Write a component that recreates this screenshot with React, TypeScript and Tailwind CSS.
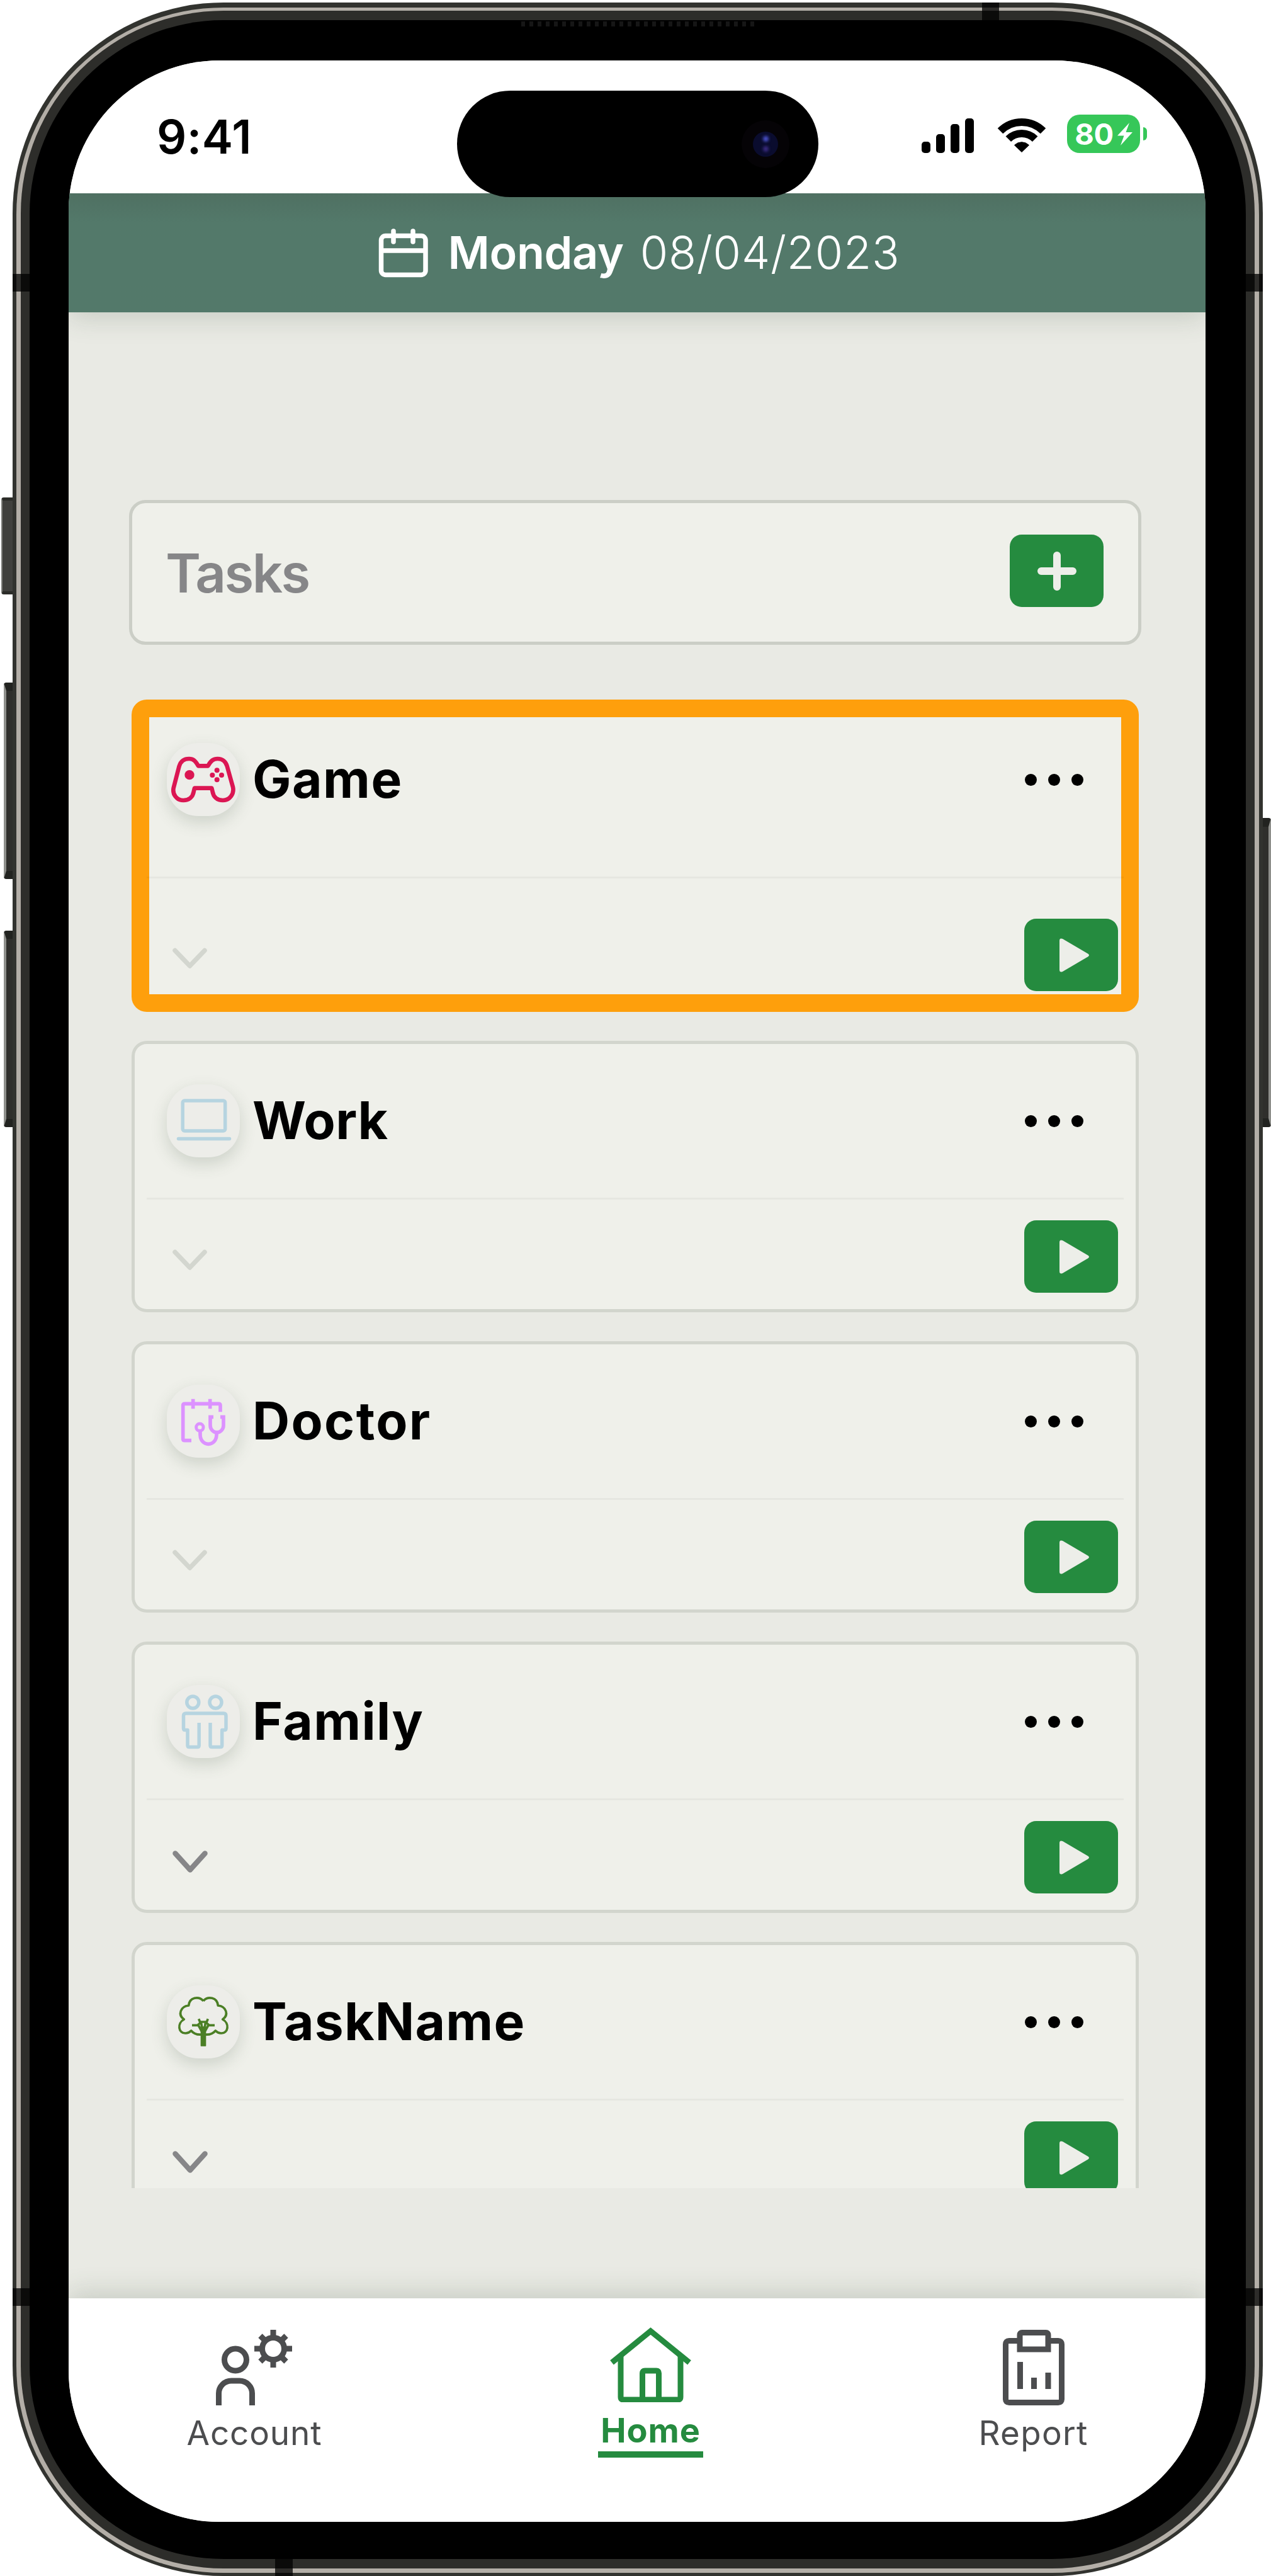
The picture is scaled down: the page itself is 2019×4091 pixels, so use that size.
import type { ReactNode } from "react";

type Task = {
  name: string;
  icon: ReactNode;
  tracking: string;
  highlighted?: boolean;
  expandable?: boolean;
};

const GameIcon = () => (
  <svg viewBox="30 28 348 348" className="size-full" fill="none" stroke="#db1653">
    <path
      strokeWidth="20"
      strokeLinejoin="round"
      d="M180 137H226C240 112 252 103 272 103C296 103 311 118 317 138L345 238C352 270 330 301 297 301C268 301 252 283 248 260L244 243H162L158 260C154 284 136 301 109 301C77 301 56 273 62 242L89 138C96 116 112 103 136 103C156 103 166 112 180 137Z"
    />
    <g fill="#db1653" stroke="none">
      <circle cx="138" cy="180" r="23" />
      <circle cx="269" cy="158" r="12" />
      <circle cx="247" cy="181" r="12" />
      <circle cx="291" cy="181" r="12" />
      <circle cx="269" cy="203" r="12" />
    </g>
  </svg>
);

const LaptopIcon = () => (
  <svg viewBox="0 0 116 116" className="size-full" fill="none" stroke="#b6d4e0" strokeWidth="5.500">
    <rect x="25.2" y="26" width="67.5" height="48" rx="3" />
    <path d="M18.500 86.5H99.500" strokeLinecap="round" />
  </svg>
);

const DoctorIcon = () => (
  <svg viewBox="30 28 348 348" className="size-full" fill="none" stroke="#dc92ff" strokeWidth="17">
    <path d="M147 294H115q-8 0-8-8V127q0-8 8-8H277q8 0 8 8V158" />
    <path d="M155 96V143M236 96V143" />
    <circle cx="187" cy="231" r="17" strokeWidth="15" />
    <path d="M189 248V268a39 43 0 0 0 78 0V255" />
    <path d="M252 182H237V222a31 33 0 0 0 63 0V182H285" />
  </svg>
);

const FamilyIcon = () => (
  <svg viewBox="0 0 116 116" className="size-full" fill="none" stroke="#b6d4e0" strokeWidth="5.500" strokeLinejoin="round">
    <circle cx="41.3" cy="27.5" r="9.5" />
    <circle cx="77.5" cy="27.5" r="9.5" />
    <path d="M51.2 60V96q0 2.5-2.5 2.5H35.5q-2.500 0-2.500-2.500V71.500H29q-2.500 0-2.500-2.500V49q0-4 4-4H90q4 0 4 4V69q0 2.500-2.500 2.500H87.700V96q0 2.500-2.500 2.500H71.500q-2.500 0-2.500-2.500V60" />
  </svg>
);

const TreeIcon = () => (
  <svg viewBox="30 28 348 348" className="size-full" fill="none" stroke="#4b7f25" strokeWidth="11" strokeLinejoin="round">
    <path d="M204 102C182 78 138 84 134 124C96 128 80 168 112 190C78 208 84 258 120 256C130 256 138 252 146 244C158 258 178 264 196 262" />
    <path d="M204 102C226 78 270 84 274 124C312 128 328 168 296 190C330 208 324 258 288 256C278 256 270 252 262 244C250 258 230 264 212 262" />
    <path d="M150 218H176L190 206M258 218H232L218 206M182 188L188 202H220L226 188M178 214L198 250M230 214L210 250M193 202L200 244M215 202L208 244" />
    <path fill="#4b7f25" strokeWidth="4" d="M193 250L200 226H208L215 250V316H193Z" />
  </svg>
);

const tasks: Task[] = [
  { name: "Game", icon: <GameIcon />, tracking: "tracking-[0.018em]", highlighted: true },
  { name: "Work", icon: <LaptopIcon />, tracking: "tracking-[0.006em]" },
  { name: "Doctor", icon: <DoctorIcon />, tracking: "tracking-[0.028em]" },
  { name: "Family", icon: <FamilyIcon />, tracking: "tracking-[0.017em]", expandable: true },
  { name: "TaskName", icon: <TreeIcon />, tracking: "tracking-[0.015em]", expandable: true },
];

function TaskCard({ task }: { task: Task }) {
  return (
    <article
      className={
        task.highlighted
          ? "h-[496px] shrink-0 rounded-[24px] bg-[#eff0ea] shadow-[inset_0_0_0_28px_#fe9f0c]"
          : "h-[431px] shrink-0 rounded-[24px] bg-[#eff0ea] shadow-[inset_0_0_0_5px_#d2d5cd]"
      }
    >
      <div className={task.highlighted ? "h-[281px] pt-[69px]" : "h-[249px] pt-[69px]"}>
        <div className="flex h-[116px] items-center pr-[88px] pl-[56px]">
          <span className="size-[116px] rounded-[50px] bg-[#edede9] shadow-[0_10px_26px_rgba(70,90,70,0.2)]">{task.icon}</span>
          <h2 className={`ml-[20px] text-[82px] leading-none font-bold text-black ${task.tracking}`}>{task.name}</h2>
          <span className="ml-auto flex gap-[18px]">
            <i className="size-[19px] rounded-full bg-black" />
            <i className="size-[19px] rounded-full bg-black" />
            <i className="size-[19px] rounded-full bg-black" />
          </span>
        </div>
      </div>
      <div className="mx-[24px] h-[3px] bg-black/[0.035]" />
      <div className={task.highlighted ? "flex justify-between pt-[64px] pr-[33px] pl-[65px]" : "flex justify-between pt-[33px] pr-[33px] pl-[65px]"}>
        <svg
          viewBox="0 0 56 37"
          className="mt-[46px] h-[37px] w-[56px]"
          fill="none"
          stroke={task.expandable ? "#868688" : "#d3d6cf"}
          strokeWidth={task.expandable ? 8.5 : 7.5}
          strokeLinecap="round"
          strokeLinejoin="round"
        >
          <path d={task.expandable ? "M4.500 5.500L28 31.500L51.500 5.500" : "M4 4.500L27.500 29L51 4.500"} />
        </svg>
        <button className="flex h-[115px] w-[149px] items-center rounded-[19px] bg-[#258b3f] pl-[56px]">
          <svg viewBox="0 0 47 54" className="h-[54px] w-[47px]">
            <path fill="#edeee9" d="M0 4Q0-1 5 1L45 24.500Q49 27 45 29.500L5 53Q0 55 0 50Z" />
          </svg>
        </button>
      </div>
    </article>
  );
}

function StatusBar() {
  return (
    <div className="relative z-10 flex h-[211px] items-start bg-white pl-[140px]">
      <span className="mt-[84px] w-[300px] text-[74px] leading-none font-semibold tracking-[0.006em] text-black">9:41</span>
      <div className="ml-auto flex items-center gap-[32px] pt-[86px] pr-[93px]">
        <div className="flex h-[60px] w-[87px] items-end gap-[9px]">
          <i className="h-[18px] w-[14px] rounded-[5px] bg-black" />
          <i className="h-[30px] w-[14px] rounded-[5px] bg-black" />
          <i className="h-[46px] w-[14px] rounded-[5px] bg-black" />
          <i className="h-[55px] w-[14px] rounded-[5px] bg-black" />
        </div>
        <svg viewBox="0 0 80 60" className="h-[60px] w-[80px]" fill="none" stroke="#000" strokeWidth="12">
          <path d="M6 25A48 48 0 0 1 74 25" />
          <path d="M18.800 37.800A30 30 0 0 1 61.200 37.800" />
          <path d="M28.500 47.500A16.300 16.300 0 0 1 51.500 47.500L40 58.500Z" fill="#000" strokeWidth="1" strokeLinejoin="round" />
        </svg>
        <div className="flex items-center gap-[5px]">
          <div className="flex h-[61px] w-[116px] items-center justify-center gap-[6px] rounded-[20px] bg-[#36c759]">
            <span className="text-[47px] leading-none font-bold tracking-[-0.01em] text-white">80</span>
            <svg viewBox="0 0 24 36" className="h-[36px] w-[24px]" fill="#fff">
              <path d="M19 0L0 20.500H10.500L5 36L24 15H13.500Z" />
            </svg>
          </div>
          <i className="h-[21px] w-[6px] rounded-r-full bg-[#36c759]" />
        </div>
      </div>
    </div>
  );
}

function DateHeader() {
  return (
    <header className="relative flex h-[189px] items-start justify-center bg-[#53796a] bg-linear-to-b from-[#4f7062] to-[#53796a] to-25% pl-[6px] text-white shadow-[0_8px_40px_rgba(60,80,60,0.2)]">
      <svg viewBox="601 363 79 78" className="mt-[56px] h-[78px] w-[79px]" fill="none" stroke="#fff" strokeWidth="7.500">
        <rect x="605.500" y="374.500" width="70.500" height="62" rx="7" />
        <path d="M605 398H677" />
        <path d="M625 367V384M656 367V384" strokeLinecap="round" />
      </svg>
      <span className="mt-[58px] ml-[32px] text-[72px] leading-none font-semibold tracking-[-0.006em]">Monday</span>
      <span className="mt-[58px] ml-[26px] text-[72px] leading-none font-light tracking-[0.011em]">08/04/2023</span>
    </header>
  );
}

function NavBar() {
  return (
    <nav className="relative flex h-[355px] items-start justify-between bg-white pr-[187px] pl-[187px] text-[#4c4d4f] shadow-[0_-8px_40px_rgba(60,80,60,0.2)]">
      <div className="flex w-[216px] flex-col items-center pt-[50px]">
        <svg viewBox="343 3700 122 120" className="h-[120px] w-[122px]" fill="none" stroke="#4c4d4f" strokeWidth="9">
          <circle cx="374" cy="3747.500" r="17.500" />
          <path d="M347.500 3820V3801a20 20 0 0 1 20-20h13a20 20 0 0 1 20 20v19" />
          <circle cx="434" cy="3730" r="17.500" />
          <path d="M434 3700V3711M434 3749V3760M404 3730H415M453 3730H464M413.500 3709.500L421 3717M454.500 3709.500L447 3717M413.500 3750.500L421 3743M454.500 3750.500L447 3743" />
        </svg>
        <span className="mt-[18px] text-[53px] leading-none tracking-[0.016em]">Account</span>
      </div>
      <div className="flex w-[167px] flex-col items-center pt-[46px] text-[#258b3f]">
        <svg viewBox="970 3696 129 119" className="h-[119px] w-[129px]" fill="none" stroke="#258b3f" strokeWidth="9">
          <path d="M973 3752L1034.500 3702L1096 3752" />
          <path d="M987 3742V3807q0 4 4 4H1078q4 0 4-4V3742" />
          <path d="M1021.500 3811V3769q0-4 4-4h18q4 0 4 4V3811" />
        </svg>
        <span className="mt-[18px] w-full border-b-[10px] border-[#258b3f] pb-[6px] text-center text-[54px] leading-none font-bold tracking-[0.016em]">Home</span>
      </div>
      <div className="flex w-[173px] flex-col items-center pt-[50px]">
        <svg viewBox="1592 3700 98 120" className="h-[120px] w-[98px]" fill="none" stroke="#4c4d4f" strokeWidth="9">
          <path d="M1619 3717.500H1602q-5.500 0-5.500 5.500V3810q0 5.500 5.500 5.500H1680q5.500 0 5.500-5.500V3723q0-5.500-5.500-5.500H1664" />
          <path d="M1619 3731V3708q0-3.500 3.500-3.500H1660.500q3.500 0 3.500 3.500V3731Z" />
          <path d="M1619.500 3751V3794M1641.500 3776V3794M1664 3768V3794" />
        </svg>
        <span className="mt-[18px] text-[53px] leading-none tracking-[0.024em]">Report</span>
      </div>
    </nav>
  );
}

/* Side keys of the handset: they stick out past the rounded body. */
function HardwareKeys() {
  return (
    <>
      <i className="absolute top-[790px] left-[2px] h-[154px] w-[20px] rounded-l-[4px] border-y-[5px] border-l-2 border-y-[#2b2c28] border-l-[#7c7d79] bg-[#40403d]" />
      <i className="absolute top-[1084px] left-[6px] h-[312px] w-[16px] rounded-l-[4px] border-y-[13px] border-l-4 border-y-[#222320] border-l-[#8f908c] bg-[#2f2f2c]" />
      <i className="absolute top-[1478px] left-[6px] h-[312px] w-[16px] rounded-l-[4px] border-y-[13px] border-l-4 border-y-[#222320] border-l-[#8f908c] bg-[#2f2f2c]" />
      <i className="absolute top-[1299px] left-[2004px] h-[491px] w-[15px] rounded-r-[4px] border-y-[14px] border-r-4 border-y-[#222320] border-r-[#8f908c] bg-[#2f2f2c]" />
    </>
  );
}

/* Antenna breaks in the metal band. */
function AntennaBands() {
  return (
    <>
      <i className="absolute top-[435px] left-[20px] h-[28px] w-[27px] bg-black/75" />
      <i className="absolute top-[435px] left-[1979px] h-[28px] w-[27px] bg-black/75" />
      <i className="absolute top-[3634px] left-[20px] h-[28px] w-[27px] bg-black/75" />
      <i className="absolute top-[3634px] left-[1979px] h-[28px] w-[27px] bg-black/75" />
      <i className="absolute top-[4px] left-[1560px] h-[28px] w-[27px] bg-black/75" />
      <i className="absolute top-[4064px] left-[437px] h-[27px] w-[28px] bg-black/75" />
    </>
  );
}

function DynamicIsland() {
  return (
    <div className="absolute top-[144px] left-[726px] z-20 flex h-[169px] w-[574px] items-center justify-end rounded-full bg-black pr-[46px]">
      <span className="flex size-[76px] items-center justify-center rounded-full bg-[#050306]">
        <span className="flex size-[40px] flex-col items-center justify-center gap-[7px] rounded-full bg-[#0a0c2e]">
          <i className="size-[9px] rounded-full bg-[#4a50c8] blur-[2px]" />
          <i className="size-[9px] rounded-full bg-[#3a2a80] blur-[2px]" />
        </span>
      </span>
    </div>
  );
}

export default function App() {
  return (
    <main className="relative h-[4091px] w-[2019px] overflow-hidden bg-white pt-[4px] pl-[20px] font-['Inter',sans-serif]">
      <HardwareKeys />
      <div className="relative h-[4087px] w-[1986px] rounded-[335px] bg-[#32332f] px-[6px] pt-[8px] pb-[5px]">
        <div className="h-full rounded-[329px] bg-[#b3aea7] px-[7px] pt-[5px] pb-[7px]">
          <div className="h-full rounded-[322px] bg-[#2d2d2a] px-[14px] py-[15px]">
            <div className="h-full rounded-[308px] bg-black pt-[64px] pr-[64px] pb-[59px] pl-[62px]">
              <div className="flex h-full flex-col overflow-hidden rounded-[240px] bg-[#e9eae4]">
                <StatusBar />
                <DateHeader />
                <section className="flex min-h-0 flex-1 flex-col items-center">
                  <div className="mt-[298px] -ml-[6px] flex h-[230px] w-[1608px] shrink-0 items-start justify-between rounded-[26px] border-[5px] border-[#cbcec6] bg-[#eff0ea] pr-[55px] pl-[53px]">
                    <h1 className="mt-[69px] text-[85px] leading-none font-[580] tracking-[-0.03em] text-[#868688]">Tasks</h1>
                    <button className="mt-[50px] flex h-[115px] w-[149px] items-center justify-center rounded-[19px] bg-[#258b3f]">
                      <svg viewBox="0 0 62 62" className="size-[62px]" stroke="#edeee9" strokeWidth="12" strokeLinecap="round">
                        <path d="M31 6V56M6 31H56" />
                      </svg>
                    </button>
                  </div>
                  <div className="mt-[87px] -ml-[6px] flex h-[2364px] w-[1600px] shrink-0 flex-col gap-[46px] overflow-hidden">
                    {tasks.map((task) => (
                      <TaskCard key={task.name} task={task} />
                    ))}
                  </div>
                </section>
                <NavBar />
              </div>
            </div>
          </div>
        </div>
      </div>
      <AntennaBands />
      <i className="absolute top-[34px] left-[828px] h-[8px] w-[372px] bg-[repeating-linear-gradient(90deg,#161616_0_6px,#000_6px_13px)]" />
      <DynamicIsland />
    </main>
  );
}
